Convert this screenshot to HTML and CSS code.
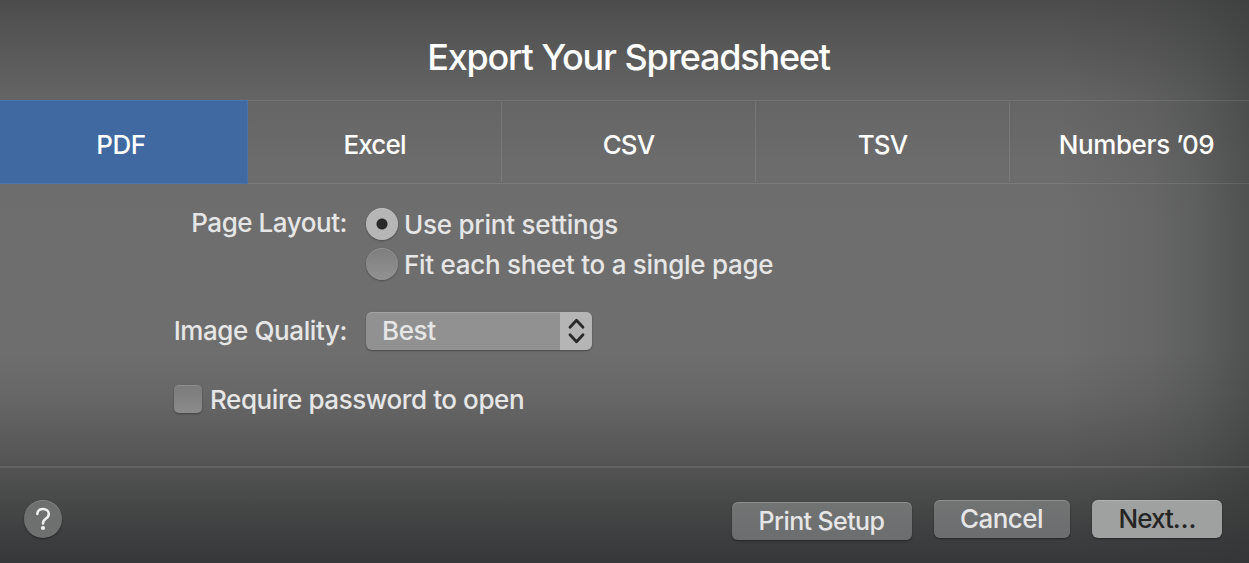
FILE: index.html
```html
<!DOCTYPE html>
<html lang="en">
<head>
<meta charset="utf-8">
<title>Export Your Spreadsheet</title>
<link rel="stylesheet" href="styles.css">
</head>
<body>
<main class="dialog">
  <h1 class="title"><span>Export Your Spreadsheet</span></h1>
  <nav class="tabs">
    <div class="tab active"><span class="t-pdf">PDF</span></div>
    <div class="tab"><span class="t-excel">Excel</span></div>
    <div class="tab"><span class="t-csv">CSV</span></div>
    <div class="tab"><span class="t-tsv">TSV</span></div>
    <div class="tab"><span class="t-numbers">Numbers ’09</span></div>
  </nav>
  <section class="options">
    <div class="row layout-row">
      <div class="label page-label">Page Layout:</div>
      <div class="radios">
        <div class="choice"><i class="radio checked"></i><span class="t-use">Use print settings</span></div>
        <div class="choice"><i class="radio"></i><span class="t-fit">Fit each sheet to a single page</span></div>
      </div>
    </div>
    <div class="row quality-row">
      <div class="label quality-label">Image Quality:</div>
      <div class="select">
        <span class="value">Best</span>
        <span class="stepper"><svg width="32" height="38" viewBox="0 0 32 38"><path d="M10 15.2 16.5 8.2 23 15.2M10 22.8 16.5 29.8 23 22.8" fill="none" stroke="#292929" stroke-width="2.8" stroke-linecap="round" stroke-linejoin="round"/></svg></span>
      </div>
    </div>
    <div class="password-row"><i class="checkbox"></i><span class="t-require">Require password to open</span></div>
  </section>
  <footer class="footer">
    <div class="help"><svg width="38" height="38" viewBox="0 0 38 38"><path d="M13.3 14C13.5 10.9 15.8 9.1 19 9.1C22.4 9.1 24.8 11.2 24.8 14C24.8 16.3 23.7 17.5 21.8 18.8C19.7 20.2 19 21.1 19 23.4" fill="none" stroke="#f0f0f0" stroke-width="2.5" stroke-linecap="round"/><circle cx="19" cy="28" r="2.1" fill="#f0f0f0"/></svg></div>
    <div class="buttons">
      <div class="button print"><span>Print Setup</span></div>
      <div class="button cancel"><span>Cancel</span></div>
      <div class="button next"><span>Next…</span></div>
    </div>
  </footer>
</main>
</body>
</html>
```
FILE: styles.css
```css
* { box-sizing: border-box; }
body { margin: 0; }
.dialog {
  width: 1249px;
  height: 563px;
  overflow: hidden;
  display: flex;
  flex-direction: column;
  font: 450 26px/32px Inter, "Liberation Sans", sans-serif;
  color: #e6e6e6;
  white-space: nowrap;
  background:
    linear-gradient(90deg, rgba(50,52,52,0) 1060px, rgba(50,52,52,.12) 1149px, rgba(50,52,52,.27) 1199px, rgba(50,52,52,.5) 1249px),
    linear-gradient(180deg, #4c4c4c 0, #565656 40px, #656565 100px, #6c6c6c 165px, #6e6e6e 220px, #6e6e6e 350px, #676767 395px, #5c5c5c 435px, #525352 467px, #464747 505px, #3c3d3e 540px, #37383a 563px);
}
.title {
  margin: 0;
  height: 100px;
  padding: 35px 0 0 8px;
  font-size: 36px;
  line-height: 44px;
  font-weight: 500;
  color: #fff;
  text-align: center;
}
.title span { letter-spacing: -1.2px; word-spacing: .4px; }
.tabs {
  height: 84px;
  margin-left: -6px;
  width: 1270px;
  display: grid;
  grid-template-columns: repeat(5, 254px);
  border-top: 1px solid rgba(255,255,255,.1);
  border-bottom: 1px solid rgba(255,255,255,.1);
}
.tab {
  display: flex;
  justify-content: center;
  padding-top: 28px;
  color: #fff;
  font-weight: 500;
  background: linear-gradient(rgba(255,255,255,.1), rgba(255,255,255,.1)) right 0 top 1px / 1px 80px no-repeat;
}
.tab.active {
  margin: -1px 0;
  padding-top: 28px;
  background: #4069a1;
  border: 1px solid #4a73ac;
}
.t-pdf { letter-spacing: -.5px; }
.t-excel, .t-csv, .t-tsv { letter-spacing: -.85px; margin-right: 1px; }
.t-numbers { letter-spacing: -.4px; margin-right: 1px; }
.options { height: 282px; padding: 22px 0 0 174px; }
.row { display: flex; }
.label { width: 173px; margin-right: 19px; display: flex; justify-content: flex-end; }
.layout-row { height: 105px; }
.page-label { padding-top: 1px; letter-spacing: -.46px; }
.radios { display: flex; flex-direction: column; gap: 8px; padding-top: 2px; }
.choice { display: flex; gap: 6px; height: 32px; }
.choice span { padding-top: 1px; }
.t-use { letter-spacing: -.24px; }
.t-fit { letter-spacing: -.28px; }
.radio {
  width: 32px;
  height: 32px;
  border-radius: 50%;
  background: linear-gradient(#7e7e7e, #929292);
  box-shadow: 0 1px 2px rgba(0,0,0,.3), inset 0 1px 0 rgba(255,255,255,.14);
}
.radio.checked { background: radial-gradient(circle, #292929 5px, #b6b6b6 6px); }
.quality-label { padding-top: 3px; letter-spacing: -.4px; }
.quality-row { height: 73px; padding-top: 1px; }
.select {
  display: flex;
  justify-content: space-between;
  width: 226px;
  height: 38px;
  border-radius: 6px;
  overflow: hidden;
  background: #919191;
  box-shadow: 0 1px 2px rgba(0,0,0,.35), inset 0 1px 0 rgba(255,255,255,.18);
}
.value { padding: 3px 0 0 16px; letter-spacing: -.4px; }
.stepper { width: 32px; background: #b5b5b5; }
.stepper svg, .help svg { display: block; }
.password-row { display: flex; gap: 8px; }
.t-require { letter-spacing: -.42px; }
.checkbox {
  width: 28px;
  height: 28px;
  margin-top: 1px;
  border-radius: 5px;
  background: linear-gradient(#7b7b7b, #8b8b8b);
  box-shadow: 0 1px 2px rgba(0,0,0,.35), inset 0 1px 0 rgba(255,255,255,.14);
}
.footer {
  height: 97px;
  padding: 32px 27px 0 24px;
  display: flex;
  justify-content: space-between;
  border-top: 2px solid rgba(255,255,255,.09);
}
.help {
  width: 38px;
  height: 38px;
  border-radius: 50%;
  background: #6e6f6f;
  box-shadow: 0 1px 2px rgba(0,0,0,.4), inset 0 1px 0 rgba(255,255,255,.14);
}
.buttons { display: flex; gap: 22px; }
.button {
  height: 38px;
  padding-top: 3px;
  text-align: center;
  border-radius: 6px;
  background: linear-gradient(#727373, #6c6d6e);
  box-shadow: 0 1px 2px rgba(0,0,0,.4), inset 0 1px 0 rgba(255,255,255,.2);
}
.print { width: 180px; margin-top: 2px; padding-right: 1px; font-size: 25px; letter-spacing: -.6px; }
.cancel { width: 136px; padding-right: 1px; letter-spacing: -.55px; }
.next { width: 130px; background: #9fa0a0; color: #252525; letter-spacing: -.95px; }
```
